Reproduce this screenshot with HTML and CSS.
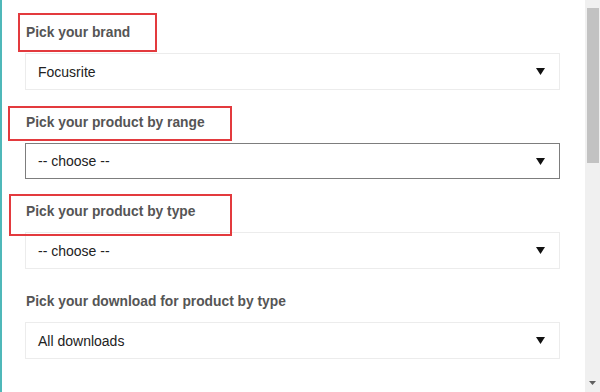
FILE: index.html
```html
<!DOCTYPE html>
<html lang="en">
  <head>
    <meta charset="UTF-8" />
    <meta name="viewport" content="width=device-width, initial-scale=1.0" />
    <title>Downloads</title>
    <link rel="stylesheet" href="styles.css">
  </head>
  <body>
    <div class="page">
      <div class="form">
        <!-- brand -->
        <div class="field">
          <div class="field-label">
            Pick your brand
            <span class="mark mark-brand"></span>
          </div>
          <div class="select">
            <span>Focusrite</span>
            <svg class="caret" viewBox="0 0 9 7"><polygon points="0,0 9,0 4.5,7"></polygon></svg>
          </div>
        </div>
        <!-- range -->
        <div class="field">
          <div class="field-label">
            Pick your product by range
            <span class="mark mark-range"></span>
          </div>
          <div class="select select-focus">
            <span>-- choose --</span>
            <svg class="caret" viewBox="0 0 9 7"><polygon points="0,0 9,0 4.5,7"></polygon></svg>
          </div>
        </div>
        <!-- type -->
        <div class="field">
          <div class="field-label">
            Pick your product by type
            <span class="mark mark-type"></span>
          </div>
          <div class="select">
            <span>-- choose --</span>
            <svg class="caret" viewBox="0 0 9 7"><polygon points="0,0 9,0 4.5,7"></polygon></svg>
          </div>
        </div>
        <!-- download -->
        <div class="field">
          <div class="field-label">Pick your download for product by type</div>
          <div class="select">
            <span>All downloads</span>
            <svg class="caret" viewBox="0 0 9 7"><polygon points="0,0 9,0 4.5,7"></polygon></svg>
          </div>
        </div>
      </div>

      <div class="scrollbar">
        <div class="scrollbar-thumb"></div>
        <svg class="scrollbar-arrow" viewBox="0 0 7 4"><polygon points="0,0 7,0 3.5,4"></polygon></svg>
      </div>
    </div>
  </body>
</html>
```

FILE: styles.css
```css
*,
*:before,
*:after {
  box-sizing: border-box;
}
body {
  margin: 0;
  background: #fff;
  font: 14px/1 "Liberation Sans", Arial, sans-serif;
}
.page {
  display: flex;
  height: 392px;
  border-left: 2px solid #4fb8b9;
  overflow: hidden;
}
.form {
  flex: 1;
  padding: 23px 25px 0 23px;
}
.field {
  margin-bottom: 23px;
}
.field-label {
  position: relative;
  padding-left: 1px;
  margin-bottom: 10px;
  color: #555;
  font-weight: bold;
  font-size: 13.8px;
  line-height: 20px;
}
/* red annotation boxes drawn over the labels */
.mark {
  position: absolute;
  border: 2px solid #e33a3e;
}
.mark-brand {
  left: -7px;
  top: -10px;
  width: 139px;
  height: 39px;
}
.mark-range {
  left: -17px;
  top: -7px;
  width: 224px;
  height: 35px;
}
.mark-type {
  left: -16px;
  top: -8px;
  width: 223px;
  height: 42px;
}
.select {
  display: flex;
  align-items: center;
  justify-content: space-between;
  height: 37px;
  padding: 0 14px 0 12px;
  border: 1px solid #ececec;
  color: #222;
  font-size: 14px;
}
.select-focus {
  height: 36px;
  border-color: #7d7d7d;
}
.caret {
  width: 9px;
  height: 7px;
  fill: #111;
}
.scrollbar {
  display: flex;
  flex-direction: column;
  justify-content: space-between;
  align-items: center;
  width: 15px;
  background: #f0f0f0;
}
.scrollbar-thumb {
  width: 12px;
  height: 155px;
  margin-top: 8px;
  background: #c2c2c2;
}
.scrollbar-arrow {
  width: 7px;
  height: 4px;
  margin-bottom: 7px;
  fill: #606060;
}
```
